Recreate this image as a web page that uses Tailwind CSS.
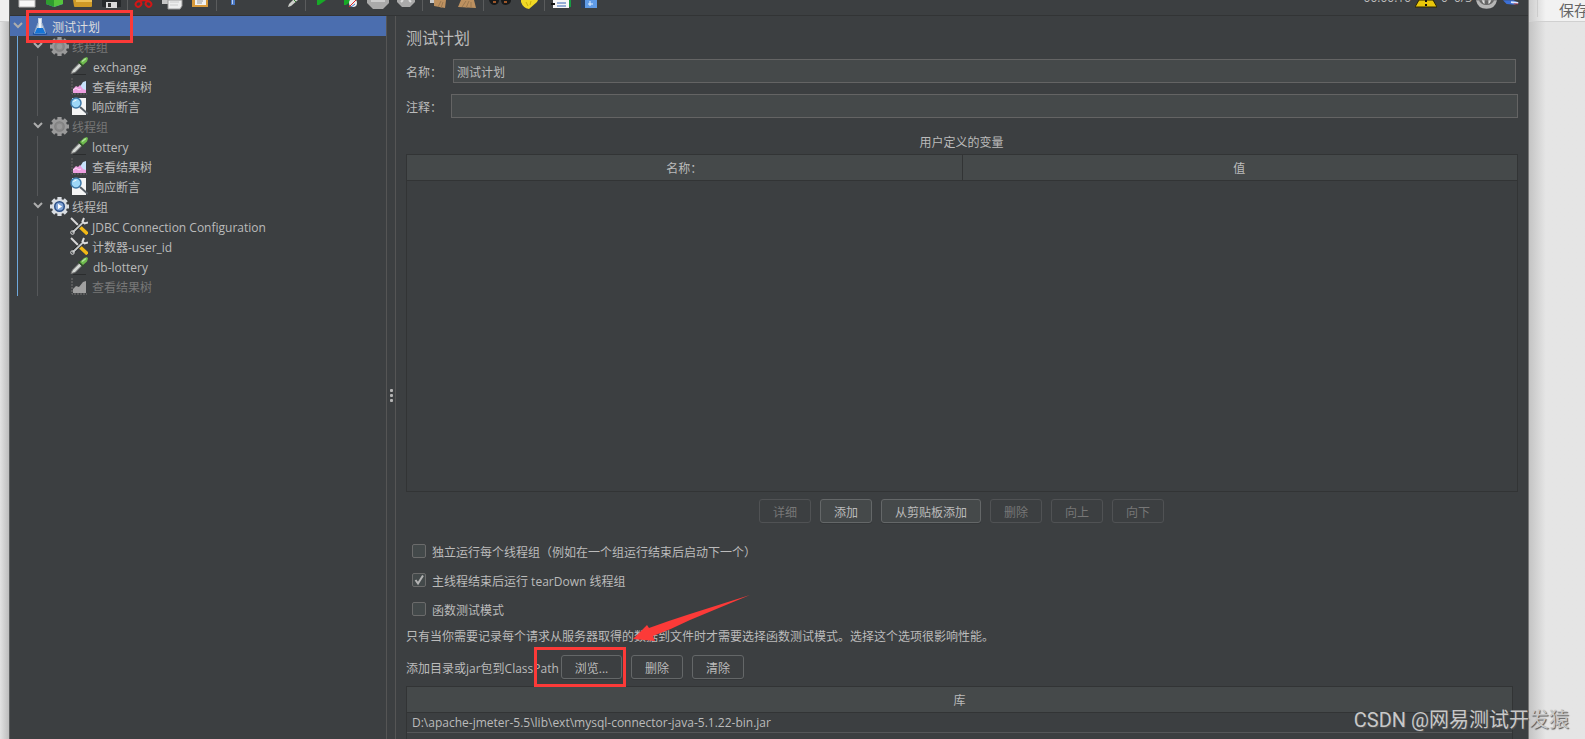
<!DOCTYPE html>
<html lang="zh-CN">
<head>
<meta charset="utf-8">
<title>测试计划</title>
<script src="https://cdn.jsdelivr.net/npm/@tailwindcss/browser@4"></script>
</head>
<body class="relative flex h-screen overflow-hidden bg-[#e5e5e5] font-['Open_Sans','Noto_Sans_CJK_SC',sans-serif] text-xs text-[#bbbbbb]">
<svg class="hidden">
  <defs>
    <symbol id="chev" viewBox="0 0 10 10"><path d="M1 2l4 4 4-4" fill="none" stroke="#adadad" stroke-width="2"/></symbol>
    <symbol id="flask" viewBox="0 0 16 18"><path d="M1 16.500q7 2 14 0" stroke="#1d4f9b" stroke-width="2" fill="none"/><path d="M6 1h4v5l4 10.500H2L6 6z" fill="#c3d0e2"/><path d="M5 11h6l2.500 5.500h-11z" fill="#1674d6"/><path d="M8 2v9" stroke="#fff" stroke-width="1.500"/><path d="M6 6L3 14M10 6l3 8" stroke="#8ea4c4"/></symbol>
    <symbol id="gear" viewBox="0 0 20 20"><circle cx="10" cy="10" r="7.200" fill="currentColor"/><path d="M10 1v18M1 10h18M3.600 3.600l12.800 12.800M16.400 3.600L3.600 16.400" stroke="currentColor" stroke-width="4"/></symbol>
    <symbol id="gearoff" viewBox="1 1 18 18"><use href="#gear" width="20" height="20" color="#9a9a9a"/><circle cx="10" cy="10" r="4.500" fill="#8a8a8a" stroke="#808080"/><circle cx="10" cy="10" r="2.500" fill="#999999"/></symbol>
    <symbol id="gearon" viewBox="1 1 18 18"><use href="#gear" width="20" height="20" color="#d9dde2"/><circle cx="10" cy="10" r="4.500" fill="#7fa3d6" stroke="#2c4f86" stroke-width="1.500"/><path d="M8.500 7.500l4 2.500-4 2.500z" fill="#fff"/></symbol>
    <symbol id="pipette" viewBox="1 1 18 18"><path d="M4 18.500h13" stroke="#2b2d2e"/><path d="M2 17.500l1.500-3.500 7-7 2.500 2.500-7 7z" fill="#d5d9d5" stroke="#777"/><path d="M9.500 5.500l5 5" stroke="#31502a" stroke-width="2"/><path d="M11 6l4-4 3-1 1 1.500-1 3-4 3.500z" fill="#6fbb4d"/><path d="M13 5.500l4-3" stroke="#b3e39c" stroke-width="1.500"/></symbol>
    <symbol id="chart" viewBox="0 0 18 18"><path d="M2 1v16h15" fill="none" stroke="#666" stroke-dasharray="2 1"/><path d="M9 11l4-6 3-1v10l-4-1z" fill="#c8e2fb"/><path d="M3 16v-4l3-3 2 1 2-2 3 4 3 1v3z" fill="#ee9fe0"/><path d="M3 13l3-2 3 2 2-1" fill="none" stroke="#fbe1f6"/></symbol>
    <symbol id="chartoff" viewBox="0 0 18 18"><path d="M2 1v16h15" fill="none" stroke="#777" stroke-dasharray="2 1"/><path d="M3 16v-4l3-3 3 1 4-5 3-1v12z" fill="#a0a0a0"/></symbol>
    <symbol id="lens" viewBox="1 0 18 18"><path d="M3 1h14v17H3z" fill="#f4f4f4"/><path d="M11 10l8 7" stroke="#555d64" stroke-width="2"/><circle cx="7" cy="6" r="5" fill="#9ed7f7" stroke="#3e79a9" stroke-width="1.500"/><path d="M4.500 5q1-2 3-2" stroke="#fff" fill="none"/></symbol>
    <symbol id="tools" viewBox="1 0 18 18"><path d="M2 1l9 9" stroke="#d8d8d8" stroke-width="2"/><path d="M11 10l7.500 7" stroke="#f2b916" stroke-width="3.500"/><path d="M3.500 15.500L14 5.500" stroke="#1d1f20" stroke-width="3.500"/><path d="M3.500 15.500L14 5.500" stroke="#c4c8ca" stroke-width="2"/><circle cx="3.500" cy="15.500" r="1.800" fill="none" stroke="#d9d9d9"/><path d="M15 1l-1.500 3.500 2 2 3.500-1" fill="none" stroke="#dddddd" stroke-width="2"/></symbol>
  </defs>
</svg>

<!-- left backdrop -->
<div class="flex w-[10px] shrink-0 flex-col border-r border-[#5c5e5f]">
  <div class="h-[21px] bg-[#efefef]"></div>
  <div class="grow border-t border-[#cfcfcf] bg-linear-to-r from-[#e2e2e2] to-[#bdbdbd]"></div>
</div>

<div class="flex min-w-0 grow flex-col bg-[#3c3f41]">
  <!-- toolbar, scrolled partly out of view -->
  <header class="flex h-4 shrink-0 justify-between border-b border-[#323435]">
    <svg class="h-[15px] w-[600px]" viewBox="10 0 600 15">
      <path d="M19 0h16v7H19z" fill="#f7f7f7" stroke="#b5b5b5"/>
      <path d="M46 0l8 3 9-2v3l-9 3-8-3z" fill="#3c9be0"/><path d="M46 0h8v7l-8-3z" fill="#2f9d2f"/><path d="M54 0h9v4l-9 3z" fill="#55c53c"/>
      <path d="M73 0h19v6q0 1-1 1H75q-1 0-1-1z" fill="#cf9a27"/><path d="M76 0h16v2H76z" fill="#ecc257"/>
      <path d="M102 0h19v7h-18q-1 0-1-1z" fill="#26292b"/><path d="M106 2h11v6h-11z" fill="#dadada"/><path d="M108 3h3v4h-3z" fill="#333"/>
      <path d="M127.500 0v11M216.500 0v11M305.500 0v11M422.500 0v11M483.500 0v11M544.500 0v11" stroke="#5a5c5d"/>
      <g fill="none" stroke="#d31616" stroke-width="2"><ellipse cx="138.500" cy="4" rx="3" ry="2.500" transform="rotate(-40 138.500 4)"/><ellipse cx="148.500" cy="4" rx="3" ry="2.500" transform="rotate(40 148.500 4)"/><path d="M140 1l4-1 4 1"/></g>
      <path d="M162 0h12v4h-12z" fill="#c6c6c6"/><path d="M168 0h14v6l-2 3h-12z" fill="#ededed" stroke="#999"/><path d="M170 2h9M170 5h8" stroke="#ccc"/>
      <path d="M192 0h16v7h-16z" fill="#d99a3b"/><path d="M195 0h11v5h-11z" fill="#f1f1f1"/><path d="M197 1h6M197 3h5" stroke="#999"/>
      <path d="M231 0h4v5h-4z" fill="#4a78c4"/><path d="M232 0h1v4h-1z" fill="#b9cff2"/>
      <path d="M288 7l1-3 4-4h5l-7 6z" fill="#cdd0cb"/><path d="M294 0l2 2" stroke="#383" />
      <path d="M317 0h9l-7 5h-2z" fill="#17a927"/>
      <path d="M344 0h9l-7 5h-2z" fill="#17a927"/><circle cx="353" cy="3" r="4" fill="#eee"/><path d="M349 7l7-7" stroke="#d22"/><path d="M351 7l4-3" stroke="#3774c8"/>
      <path d="M367 0h22v3l-6 6h-10l-6-6z" fill="#aaa"/><path d="M371 1h14" stroke="#ccc" stroke-width="2"/>
      <path d="M397 0h18v2l-5 5h-8l-5-5z" fill="#aaa"/><path d="M401 2l2-2M409 0l2 2" stroke="#ddd" stroke-width="2"/>
      <path d="M430 0h7v3h-7z" fill="#c8c8c8"/><path d="M434 0h12l-1 8-11-2z" fill="#bd9160"/><path d="M438 7l3-6M441 8l2-6" stroke="#9a7850"/>
      <path d="M461 0h13l2 8-18-1z" fill="#bd9160"/><path d="M462 7l4-6M466 8l3-7M471 8v-6" stroke="#9a7850"/>
      <path d="M489 0h10q0 4-4 5-5 0-6-5zM501 0h10q0 4-5 5-5 0-5-5z" fill="#17191a"/><path d="M493 1h3v2h-3zM504 1h3v2h-3z" fill="#9e572a"/>
      <path d="M521 0h17l-1 2-8 7q-6-1-8-7z" fill="#f1d925"/><path d="M526 2l2 4M531 1l-1 4" stroke="#c9ae0c"/>
      <path d="M568 0h3v7h-3z" fill="#179943"/><path d="M553 0h16v8h-16z" fill="#f7f7f7"/><path d="M557 3h9M557 6h9" stroke="#3565b5"/><path d="M551 4h4" stroke="#111" stroke-width="2"/>
      <path d="M581 0h16v8h-16z" fill="#5f9be6"/><path d="M581 0h4v8h-4z" fill="#283f62"/><path d="M590 1v5M588 4h5" stroke="#e4f0ff"/>
    </svg>
    <div class="flex h-[15px] shrink-0 pr-[9px] leading-none">
      <span class="-mt-2 mr-1">00:00:10</span>
      <svg class="mr-1 h-2 w-[22px]" viewBox="0 0 22 8"><path d="M4 0h14l4 7H0z" fill="#e9c60a" stroke="#2c2700"/><path d="M11 0v2M11 4v2" stroke="#111" stroke-width="2"/></svg>
      <span class="-mt-2 mr-[6px]">0</span>
      <span class="-mt-2 mr-1">0/3</span>
      <svg class="mr-[6px] h-[9px] w-[21px]" viewBox="0 0 22 9"><path d="M0 0h22q-2 9-11 9T0 0z" fill="#b5b5b5"/><path d="M3 0h16q-2 5-8 5T3 0z" fill="#666"/><path d="M6 0q1 3 3 4V0zM16 0q-1 3-3 4V0z" fill="#ddd"/></svg>
      <svg class="h-[6px] w-4" viewBox="0 0 18 6"><path d="M0 0h12l6 3-5 2-9-1z" fill="#3b6fd6"/><path d="M9 2l8 1" stroke="#dce8ff" stroke-width="2"/><path d="M12 4h5" stroke="#b33"/></svg>
    </div>
  </header>

  <div class="flex min-h-0 grow">
    <!-- test plan tree -->
    <nav class="w-[377px] shrink-0 border-r border-[#555555]">
      <div class="flex h-5 items-center bg-[#4b6eaf] pl-[3px] text-[#dddddd]">
        <svg class="mr-[9px] size-[10px]"><use href="#chev"/></svg>
        <svg class="mr-1 h-[18px] w-4"><use href="#flask"/></svg>
        <a class="pt-[3px]" href="#plan">测试计划</a>
      </div>
      <div class="ml-[7px] border-l border-[#6ea8dc]">
        <div class="flex h-5 items-center pl-[15px] text-[#777777]"><svg class="mr-[7px] size-[10px]"><use href="#chev"/></svg><svg class="mr-[3px] size-[19px]"><use href="#gearoff"/></svg><a class="pt-[3px]" href="#g1">线程组</a></div>
        <ul class="ml-[19px] border-l border-[#555759] pl-8">
          <li class="flex h-5 items-center gap-[5px]"><svg class="size-[18px]"><use href="#pipette"/></svg><a class="pt-[3px]" href="#s1">exchange</a></li>
          <li class="flex h-5 items-center gap-1"><svg class="size-[18px]"><use href="#chart"/></svg><a class="pt-[3px]" href="#s2">查看结果树</a></li>
          <li class="flex h-5 items-center gap-1"><svg class="size-[18px]"><use href="#lens"/></svg><a class="pt-[3px]" href="#s3">响应断言</a></li>
        </ul>
        <div class="flex h-5 items-center pl-[15px] text-[#777777]"><svg class="mr-[7px] size-[10px]"><use href="#chev"/></svg><svg class="mr-[3px] size-[19px]"><use href="#gearoff"/></svg><a class="pt-[3px]" href="#g2">线程组</a></div>
        <ul class="ml-[19px] border-l border-[#555759] pl-8">
          <li class="flex h-5 items-center gap-1"><svg class="size-[18px]"><use href="#pipette"/></svg><a class="pt-[3px]" href="#s4">lottery</a></li>
          <li class="flex h-5 items-center gap-1"><svg class="size-[18px]"><use href="#chart"/></svg><a class="pt-[3px]" href="#s5">查看结果树</a></li>
          <li class="flex h-5 items-center gap-1"><svg class="size-[18px]"><use href="#lens"/></svg><a class="pt-[3px]" href="#s6">响应断言</a></li>
        </ul>
        <div class="flex h-5 items-center pl-[15px]"><svg class="mr-[7px] size-[10px]"><use href="#chev"/></svg><svg class="mr-[3px] size-[19px]"><use href="#gearon"/></svg><a class="pt-[3px]" href="#g3">线程组</a></div>
        <ul class="ml-[19px] border-l border-[#555759] pl-8">
          <li class="flex h-5 items-center gap-1"><svg class="size-[18px]"><use href="#tools"/></svg><a class="pt-[3px]" href="#s7">JDBC Connection Configuration</a></li>
          <li class="flex h-5 items-center gap-1"><svg class="size-[18px]"><use href="#tools"/></svg><a class="pt-[3px]" href="#s8">计数器-user_id</a></li>
          <li class="flex h-5 items-center gap-[5px]"><svg class="size-[18px]"><use href="#pipette"/></svg><a class="pt-[3px]" href="#s9">db-lottery</a></li>
          <li class="flex h-5 items-center gap-1 text-[#777777]"><svg class="size-[18px]"><use href="#chartoff"/></svg><a class="pt-[3px]" href="#s10">查看结果树</a></li>
        </ul>
      </div>
    </nav>
    <div class="flex w-2 shrink-0 flex-col items-center justify-center gap-[2px] pt-9 [&>i]:size-[3px] [&>i]:rounded-[1px] [&>i]:bg-[#b4b4b4]"><i></i><i></i><i></i></div>

    <!-- editor -->
    <main class="flex min-w-0 grow flex-col border-l border-[#555555] px-[10px] pt-2">
      <h1 class="text-base leading-7">测试计划</h1>
      <div class="mt-[7px] flex h-6 items-center pr-[2px]">
        <label for="nm" class="w-[47px] pt-[3px]">名称：</label>
        <input id="nm" value="测试计划" class="h-6 min-w-0 grow border border-[#646464] bg-[#45494a] px-[3px] pt-[2px]">
      </div>
      <div class="mt-[11px] flex h-6 items-center">
        <label for="cm" class="w-[45px] pt-[3px]">注释：</label>
        <input id="cm" class="h-6 min-w-0 grow border border-[#646464] bg-[#45494a] px-[3px] pt-[2px]">
      </div>
      <h2 class="mt-[15px] pr-px pb-px text-center leading-5">用户定义的变量</h2>
      <div class="h-[338px] border border-[#323435]">
        <table class="w-full table-fixed border-collapse">
          <thead><tr class="h-[25px] border-b border-[#323435] bg-[#45494a]"><th class="border-r border-[#323435] p-0 pt-1 font-normal">名称：</th><th class="p-0 pt-1 pr-px font-normal">值</th></tr></thead>
        </table>
      </div>
      <div class="mt-[7px] flex justify-center gap-[9px] pr-px [&>button]:h-6 [&>button]:rounded-[3px] [&>button]:border [&>button]:px-[13px] [&>button]:pt-[3px]">
        <button disabled class="border-[#505254] text-[#777777]">详细</button>
        <button class="border-[#646768] bg-[#45494a] shadow-[0_1px_0_#35383a]">添加</button>
        <button class="border-[#646768] bg-[#45494a] shadow-[0_1px_0_#35383a]">从剪贴板添加</button>
        <button disabled class="border-[#505254] text-[#777777]">删除</button>
        <button disabled class="border-[#505254] text-[#777777]">向上</button>
        <button disabled class="border-[#505254] text-[#777777]">向下</button>
      </div>
      <div class="mt-[13px] pl-[6px] [&_input]:size-[14px] [&_input]:appearance-none [&_input]:rounded-[2px] [&_input]:border [&_input]:border-[#6b6b6b] [&_input]:bg-[#43494a] [&>label]:flex [&>label]:h-[29px] [&>label]:items-center [&>label]:gap-[6px]">
        <label><input type="checkbox"><span class="pt-1">独立运行每个线程组（例如在一个组运行结束后启动下一个）</span></label>
        <label><span class="relative flex"><input type="checkbox" checked><svg class="pointer-events-none absolute inset-0 size-[14px]" viewBox="0 0 14 14"><path d="M3.500 7l2.500 3.500 5-8" fill="none" stroke="#b4b4b4" stroke-width="2"/></svg></span><span class="pt-1">主线程结束后运行 tearDown 线程组</span></label>
        <label><input type="checkbox"><span class="pt-1">函数测试模式</span></label>
      </div>
      <p class="mt-1 leading-5">只有当你需要记录每个请求从服务器取得的数据到文件时才需要选择函数测试模式。选择这个选项很影响性能。</p>
      <div class="mt-2 flex items-center gap-[9px] [&>button]:h-6 [&>button]:shrink-0 [&>button]:rounded-[3px] [&>button]:border [&>button]:border-[#646768] [&>button]:px-3 [&>button]:pt-[3px] [&>button]:whitespace-nowrap [&>button]:shadow-[0_1px_0_#35383a]">
        <span class="w-[146px] pt-[3px] whitespace-nowrap">添加目录或jar包到ClassPath</span>
        <button class="w-[61px]">浏览...</button>
        <button class="w-[52px]">删除</button>
        <button class="w-[52px]">清除</button>
      </div>
      <div class="mt-[7px] mr-[5px] grow border border-b-0 border-[#323435]">
        <table class="w-full border-collapse">
          <thead><tr class="h-[25px] border-b border-[#323435] bg-[#45494a]"><th class="p-0 pt-1 font-normal">库</th></tr></thead>
          <tbody><tr class="h-5 border-b border-[#555759]"><td class="p-0 pt-[2px] pl-[5px] leading-none">D:\apache-jmeter-5.5\lib\ext\mysql-connector-java-5.1.22-bin.jar</td></tr></tbody>
        </table>
      </div>
    </main>
  </div>
</div>

<!-- right backdrop -->
<aside class="flex w-[57px] shrink-0 flex-col border-l border-[#777777] bg-linear-to-r from-[#c4c4c4] to-[#e5e5e5] to-30% text-[15px] text-[#666666]">
  <div class="flex h-[22px] overflow-hidden border-b border-[#d0d0d0] bg-linear-to-r from-[#cccccc] to-[#f2f2f2] to-30% pl-2">
    <div class="h-[17px] border-l border-[#cccccc]"></div>
    <span class="ml-[21px] leading-5 whitespace-nowrap">保存</span>
  </div>
</aside>

<!-- annotations -->
<div class="absolute top-[10px] left-[26px] h-[33px] w-[107px] border-3 border-[#fc3a38]"></div>
<div class="absolute top-[647px] left-[534px] h-10 w-[92px] border-3 border-[#fc3a38]"></div>
<svg class="absolute top-[594px] left-[630px] h-[50px] w-[122px]" viewBox="0 0 122 50"><path d="M120 1L60 20Q38 27 19 34l-2-3L3 45l22 2-2-5Q42 35 60 26z" fill="#fc3a38"/></svg>
<div class="absolute right-4 bottom-[5px] font-['Roboto','Noto_Sans_CJK_SC',sans-serif] text-[20px] leading-7 whitespace-nowrap text-[#c8c8c8] [text-shadow:1px_1px_1px_#555555]">CSDN @网易测试开发猿</div>
</body>
</html>
